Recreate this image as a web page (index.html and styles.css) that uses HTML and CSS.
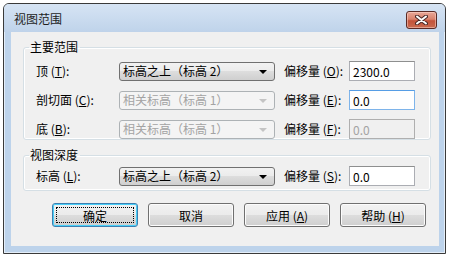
FILE: index.html
```html
<!DOCTYPE html>
<html lang="zh-CN">
<head>
    <meta charset="UTF-8">
    <title>视图范围</title>
    <link rel="stylesheet" href="styles.css">
</head>
<body>

<div class="window">
    <div class="titlebar">
        <span class="title">视图范围</span>
        <button class="close" title="关闭">
            <svg width="13" height="10" viewBox="0 0 13 10">
                <path d="M2 1.5 L11 8.5 M11 1.5 L2 8.5" stroke="#4b2a28" stroke-width="4" stroke-linecap="round"/>
                <path d="M2 1.5 L11 8.5 M11 1.5 L2 8.5" stroke="#fff" stroke-width="2" stroke-linecap="round"/>
            </svg>
        </button>
    </div>

    <div class="client">
        <fieldset class="group main">
            <legend>主要范围</legend>
            <div class="rows">
                <label>顶 (<u>T</u>):</label>
                <div class="combo">
                    <span>标高之上（标高 2）</span>
                    <i class="arrow"></i>
                </div>
                <label>偏移量 (<u>O</u>):</label>
                <input type="text" value="2300.0">

                <label>剖切面 (<u>C</u>):</label>
                <div class="combo disabled">
                    <span>相关标高（标高 1）</span>
                    <i class="arrow"></i>
                </div>
                <label>偏移量 (<u>E</u>):</label>
                <input type="text" class="focus" value="0.0">

                <label>底 (<u>B</u>):</label>
                <div class="combo disabled">
                    <span>相关标高（标高 1）</span>
                    <i class="arrow"></i>
                </div>
                <label>偏移量 (<u>F</u>):</label>
                <input type="text" value="0.0" disabled>
            </div>
        </fieldset>

        <fieldset class="group depth">
            <legend>视图深度</legend>
            <div class="rows">
                <label>标高 (<u>L</u>):</label>
                <div class="combo">
                    <span>标高之上（标高 2）</span>
                    <i class="arrow"></i>
                </div>
                <label>偏移量 (<u>S</u>):</label>
                <input type="text" value="0.0">
            </div>
        </fieldset>

        <div class="buttons">
            <button class="btn default"><span>确定</span></button>
            <button class="btn"><span>取消</span></button>
            <button class="btn"><span>应用 (<u>A</u>)</span></button>
            <button class="btn"><span>帮助 (<u>H</u>)</span></button>
        </div>
    </div>
</div>

</body>
</html>
```

FILE: styles.css
```css
body {
    margin: 0;
    padding: 3px;
    background-color: #fff;
    font-family: "Noto Sans CJK SC", "Liberation Sans", sans-serif;
    font-size: 12px;
    color: #000;
}
.window {
    width: 441px;
    height: 249px;
    border: 1px solid #3a3a3a;
    border-radius: 6px 6px 0 0;
    background-color: #bdd3eb;
    box-shadow: inset 0 0 0 1px #e4eef9;
    display: flex;
    flex-direction: column;
    overflow: hidden;
}
.titlebar {
    height: 28px;
    display: flex;
    align-items: flex-start;
    justify-content: space-between;
    background: linear-gradient(#d6e4f4, #bfd3ea);
}
.title {
    margin: 7px 0 0 10px;
    line-height: 16px;
    color: #1e1e1e;
}
.close {
    width: 31px;
    height: 18px;
    margin: 7px 8px 0 0;
    padding: 0;
    border: 1px solid #5a2a25;
    border-radius: 3px;
    background: linear-gradient(#e9a898 0%, #d9826c 45%, #c3533a 55%, #c96b50 100%);
    box-shadow: inset 0 0 0 1px rgba(255, 220, 210, 0.5);
    display: flex;
    align-items: center;
    justify-content: center;
}
.client {
    margin: 0 6px 0 7px;
    height: 214px;
    background-color: #f0f0f0;
    padding: 8px 10px 0 12px;
    box-sizing: border-box;
}
.group {
    margin: 0;
    padding: 0 15px 0 12px;
    border: 1px solid #d5dfe5;
    border-radius: 3px;
    box-shadow: inset 0 0 0 1px #fff;
}
.group legend {
    padding: 0 2px 0 1px;
    margin-left: -7px;
    line-height: 14px;
}
.main {
    height: 100px;
    box-sizing: border-box;
}
.main .rows {
    margin-top: 7px;
}
.depth {
    margin-top: 8px;
    height: 43px;
    box-sizing: border-box;
}
.depth .rows {
    margin-top: 4px;
}
.rows {
    display: grid;
    grid-template-columns: 83px 156px 74px 66px;
    grid-auto-rows: 20px;
    row-gap: 9px;
    align-items: center;
}
.rows label {
    line-height: 16px;
    white-space: nowrap;
}
.rows label:nth-child(4n+3) {
    padding-left: 9px;
}
.combo {
    height: 19px;
    box-sizing: border-box;
    border: 1px solid #707070;
    border-radius: 3px;
    background: linear-gradient(#f2f2f2 0%, #ebebeb 50%, #dddddd 50%, #cfcfcf 100%);
    display: flex;
    align-items: center;
    justify-content: space-between;
    padding: 0 7px 0 3px;
    line-height: 16px;
}
.arrow {
    width: 0;
    height: 0;
    border-left: 4px solid transparent;
    border-right: 4px solid transparent;
    border-top: 4px solid #000;
    margin-top: 2px;
}
.combo.disabled {
    border-color: #adb2b5;
    background: #f4f4f4;
    color: #a3a3a3;
}
.combo.disabled .arrow {
    border-top-color: #c4c4c4;
}
input {
    width: 66px;
    height: 20px;
    box-sizing: border-box;
    border: 1px solid #abadb3;
    border-top-color: #8e8f8f;
    background-color: #fff;
    font-family: "Noto Sans CJK SC", "Liberation Sans", sans-serif;
    font-size: 12px;
    padding: 0 3px;
    margin: 0;
    color: #000;
}
input.focus {
    border-color: #7eb4ea;
    border-top-color: #569de5;
}
input:disabled {
    background-color: #f0f0f0;
    border-color: #afafaf;
    color: #a3a3a3;
}
.buttons {
    display: flex;
    gap: 10px;
    margin: 12px 0 0 29px;
}
.btn {
    width: 86px;
    height: 24px;
    padding: 0;
    border: 1px solid #707070;
    border-radius: 3px;
    background: linear-gradient(#f2f2f2 0%, #ebebeb 50%, #dddddd 50%, #cfcfcf 100%);
    box-shadow: inset 0 0 0 1px #fcfcfc;
    font-family: "Noto Sans CJK SC", "Liberation Sans", sans-serif;
    font-size: 12px;
    color: #000;
    display: flex;
    align-items: center;
    justify-content: center;
}
.btn.default {
    border-color: #3c7fb1;
    box-shadow: inset 0 0 0 1px #48d0f8;
}
.btn.default span {
    width: 78px;
    height: 16px;
    line-height: 16px;
    border: 1px dotted #000;
    box-sizing: border-box;
}
```
